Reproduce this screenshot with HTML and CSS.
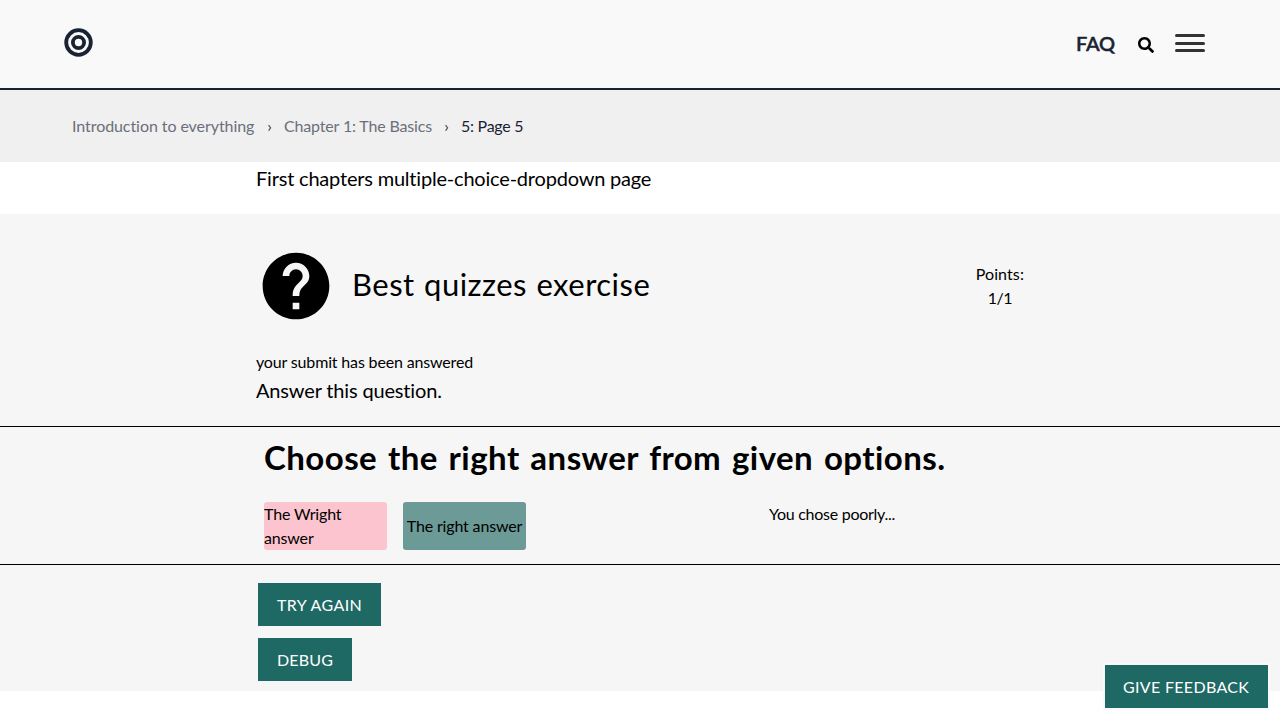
FILE: index.html
```html
<!DOCTYPE html>
<html lang="en">
<head>
<meta charset="utf-8">
<title>5: Page 5</title>
<link rel="stylesheet" href="styles.css">
</head>
<body>
<header class="navbar">
  <a class="logo" aria-label="Home"><svg width="29" height="29" viewBox="0 0 29 29" fill="none" stroke="#1a2333"><circle cx="14.5" cy="14.5" r="12.3" stroke-width="3.8"/><circle cx="14.5" cy="14.5" r="5.6" stroke-width="3.8"/></svg></a>
  <nav class="nav-links">
    <a class="faq">FAQ</a>
    <svg class="search" width="16" height="16" viewBox="0 0 512 512"><path d="M505 442.7L405.3 343c-4.500-4.500-10.600-7-17-7H372c27.600-35.300 44-79.700 44-128C416 93.100 322.900 0 208 0S0 93.100 0 208s93.100 208 208 208c48.300 0 92.700-16.400 128-44v16.300c0 6.400 2.500 12.500 7 17l99.700 99.700c9.400 9.400 24.600 9.400 33.900 0l28.300-28.300c9.400-9.400 9.400-24.600.1-34zM208 336c-70.700 0-128-57.200-128-128 0-70.700 57.200-128 128-128 70.700 0 128 57.200 128 128 0 70.700-57.200 128-128 128z"/></svg>
    <button class="menu" aria-label="Menu"><span></span><span></span><span></span></button>
  </nav>
</header>
<nav class="breadcrumbs">
  <a class="course">Introduction to everything</a><span class="sep">›</span><a class="chapter">Chapter 1: The Basics</a><span class="sep">›</span><span class="current">5: Page 5</span>
</nav>
<main>
  <p class="intro column">First chapters multiple-choice-dropdown page</p>
  <section class="exercise">
    <div class="exercise-head column">
      <svg width="80" height="80" viewBox="0 0 24 24"><path d="M12 2C6.480 2 2 6.480 2 12s4.480 10 10 10 10-4.480 10-10S17.520 2 12 2zm1 17h-2v-2h2v2zm2.070-7.750l-.9.920C13.450 12.900 13 13.500 13 15h-2v-.5c0-1.100.45-2.100 1.170-2.830l1.240-1.260c.37-.36.59-.86.59-1.410 0-1.100-.9-2-2-2s-2 .9-2 2H8c0-2.210 1.790-4 4-4s4 1.790 4 4c0 .88-.36 1.680-.93 2.250z"/></svg>
      <h2 class="title">Best quizzes exercise</h2>
      <div class="points"><div class="points-label">Points:</div><div class="points-value">1/1</div></div>
    </div>
    <p class="status column">your submit has been answered</p>
    <p class="assignment column">Answer this question.</p>
    <div class="question">
      <div class="column question-body">
        <h2 class="question-title">Choose the right answer from given options.</h2>
        <div class="answers">
          <div class="option wrong">The Wright answer</div>
          <div class="option right">The right answer</div>
          <p class="feedback">You chose poorly...</p>
        </div>
      </div>
    </div>
    <div class="actions column">
      <button class="button try-again">Try again</button>
      <button class="button debug">Debug</button>
    </div>
  </section>
</main>
<button class="button give-feedback">Give feedback</button>
</body>
</html>
```
FILE: styles.css
```css
* { box-sizing: border-box; }
body { margin: 0; background: #fff; color: #000; font: 16px/24px Lato, "Open Sans", sans-serif; letter-spacing: -.16px; overflow: hidden; }
p, h2 { margin: 0; }
button { font: inherit; }

.navbar { height: 90px; padding: 0 75px 0 64px; display: flex; justify-content: space-between; background: #f9f9f9; border-bottom: 2px solid #1a2333; }
.logo { padding-top: 28px; line-height: 0; }
.nav-links { display: flex; align-items: center; height: 88px; }
.faq { margin-bottom: 2px; color: #1a2333; font-size: 20px; font-weight: 600; letter-spacing: -.2px; -webkit-text-stroke: .4px #1a2333; }
.search { margin: 2px 21px 0 23px; }
.menu { display: flex; flex-direction: column; justify-content: space-between; width: 30px; height: 18px; margin-bottom: 2px; padding: 0; border: 0; background: none; }
.menu span { height: 3px; border-radius: 2px; background: #333; }

.breadcrumbs { height: 72px; padding: 0 72px; display: flex; align-items: center; background: #f0f0f0; color: #6b6f7a; }
.course { width: 183px; letter-spacing: -.07px; white-space: nowrap; }
.chapter { width: 148px; white-space: nowrap; }
.sep { width: 29px; text-align: center; color: #333; }
.current { color: #1a2333; letter-spacing: -.27px; }

.column { width: 768px; margin: 0 auto; }
.intro { height: 52px; font-size: 20px; line-height: 32px; letter-spacing: -.2px; }
.exercise { height: 477px; padding-top: 32px; background: #f6f6f6; }
.exercise-head { display: flex; align-items: center; height: 80px; }
.title { flex: 1; margin: 0 0 4px 16px; font-size: 31px; font-weight: 400; line-height: 40px; letter-spacing: .48px; word-spacing: 1px; }
.points { text-align: center; }
.points-label { letter-spacing: .1px; }
.points-value { letter-spacing: -.5px; }
.status { padding-top: 24px; }
.assignment { height: 52px; font-size: 20px; line-height: 32px; }
.question { height: 139px; border-top: 1px solid #000; border-bottom: 1px solid #000; }
.question-body { padding: 10px 8px 0; }
.question-title { font-size: 33px; font-weight: 700; line-height: 40px; letter-spacing: .45px; word-spacing: 2.3px; white-space: nowrap; }
.answers { display: flex; gap: 16px; padding-top: 25px; }
.option { display: flex; align-items: center; width: 123px; height: 48px; border-radius: 3px; }
.wrong { background: #fcc4ce; }
.right { justify-content: center; background: #6b9a97; }
.feedback { margin-left: 227px; letter-spacing: -.27px; }
.actions { display: flex; flex-direction: column; align-items: flex-start; gap: 8px; padding-top: 16px; }
.button { height: 47px; padding: 0 0 0 19px; border: 2px solid #f9f9f9; background: #1f6964; background-clip: padding-box; color: #fff; text-align: left; text-transform: uppercase; letter-spacing: .32px; }
.actions .button { border-color: #f6f6f6; }
.try-again { width: 127px; letter-spacing: .4px; }
.debug { width: 98px; letter-spacing: .2px; }
.give-feedback { position: fixed; right: 10px; bottom: 10px; width: 167px; padding-left: 18px; }
```
